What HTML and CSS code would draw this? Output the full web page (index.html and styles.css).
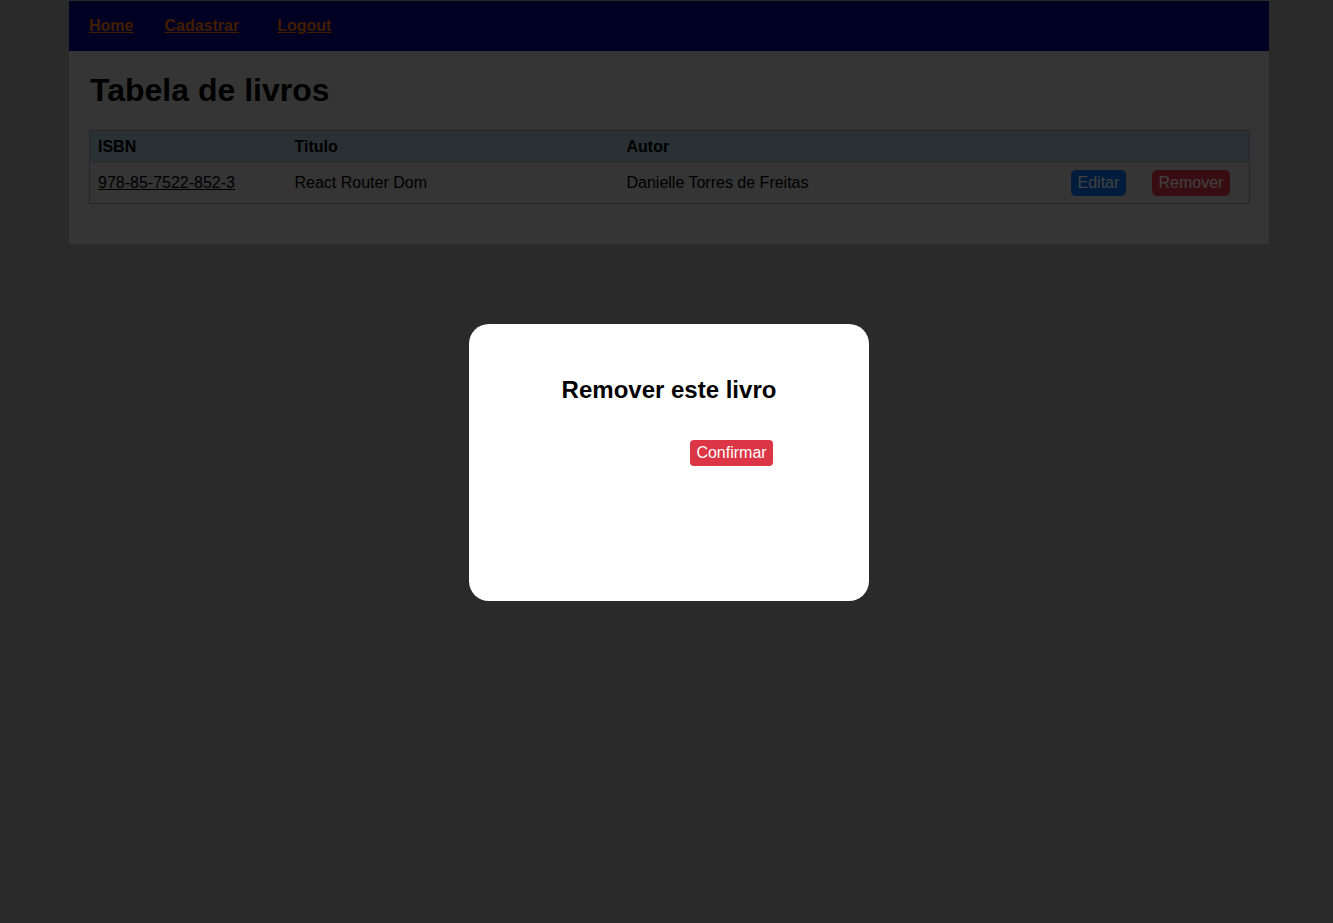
FILE: index.html
```html
<!DOCTYPE html>
<html lang="pt-BR">
<head>
<meta charset="utf-8">
<title>Tabela de livros</title>
<link rel="stylesheet" href="styles.css">
</head>
<body>
<div class="app">
  <nav class="nav">
    <a href="#" class="nav-link">Home</a>
    <a href="#" class="nav-link">Cadastrar</a>
    <a href="#" class="nav-link nav-link-last">Logout</a>
  </nav>
  <main class="content">
    <h1 class="title">Tabela de livros</h1>
    <table class="books">
      <colgroup>
        <col class="c-isbn"><col class="c-titulo"><col class="c-autor"><col class="c-edit"><col class="c-remove">
      </colgroup>
      <thead>
        <tr><th>ISBN</th><th>Titulo</th><th>Autor</th><th></th><th></th></tr>
      </thead>
      <tbody>
        <tr>
          <td><a href="#" class="isbn">978-85-7522-852-3</a></td>
          <td>React Router Dom</td>
          <td>Danielle Torres de Freitas</td>
          <td><button class="btn btn-blue">Editar</button></td>
          <td><button class="btn btn-red">Remover</button></td>
        </tr>
      </tbody>
    </table>
  </main>
</div>
<div class="overlay">
  <div class="modal">
    <h2 class="modal-title">Remover este livro</h2>
    <div class="modal-actions">
      <button class="btn btn-red btn-confirm">Confirmar</button>
    </div>
  </div>
</div>
</body>
</html>
```
FILE: styles.css
```css
html, body {
  margin: 0;
  padding: 0;
  height: 100%;
}
body {
  background: #a9a9a9;
  font-family: "Liberation Sans", Arial, sans-serif;
  font-size: 16px;
  color: #000;
}
.app {
  width: 1200px;
  margin: 1px 0 0 69px;
  background: #d3d3d3;
}
.nav {
  height: 50px;
  background: #000088;
  display: flex;
  align-items: center;
  padding-left: 20px;
  gap: 31px;
}
.nav-link {
  color: #ff7000;
  font-weight: bold;
  text-decoration: underline;
}
.nav-link-last {
  margin-left: 7px;
}
.content {
  padding: 21px 20px 40px 20px;
}
.title {
  margin: 0 0 21px 1px;
  font-size: 32px;
  line-height: 37px;
  font-weight: bold;
}
.books {
  width: 1160px;
  table-layout: fixed;
  border-collapse: collapse;
  border: 1px solid #999;
}
.c-isbn { width: 197px; }
.c-titulo { width: 332px; }
.c-autor { width: 444px; }
.c-edit { width: 81px; }
.c-remove { width: 106px; }
.books th {
  background: #a9c4d0;
  text-align: left;
  font-weight: bold;
  padding: 7px 8px 6px 8px;
  line-height: 18px;
  border-bottom: 1px solid #b0b0b0;
}
.books td {
  padding: 7px 8px;
  line-height: 18px;
  vertical-align: middle;
}
.isbn {
  color: #000;
  text-decoration: underline;
}
.btn {
  font-family: "Liberation Sans", Arial, sans-serif;
  font-size: 16px;
  line-height: 18px;
  padding: 4px 7px;
  border: none;
  border-radius: 5px;
  color: #fff;
  cursor: pointer;
}
.btn-blue { background: #0072f0; }
.btn-red { background: #dc3545; }
.overlay {
  position: fixed;
  inset: 0;
  background: rgba(0, 0, 0, 0.75);
  display: flex;
  align-items: center;
  justify-content: center;
  padding-left: 5px;
  padding-top: 1px;
}
.modal {
  width: 400px;
  height: 277px;
  box-sizing: border-box;
  background: #fff;
  border-radius: 20px;
  padding-top: 52px;
  display: flex;
  flex-direction: column;
}
.modal-title {
  margin: 0;
  font-size: 24px;
  line-height: 28px;
  font-weight: bold;
  text-align: center;
}
.modal-actions {
  margin-top: 36px;
  display: flex;
  justify-content: center;
}
.btn-confirm {
  margin-left: 125px;
  padding: 4px 6px;
  border-radius: 4px;
}
```
